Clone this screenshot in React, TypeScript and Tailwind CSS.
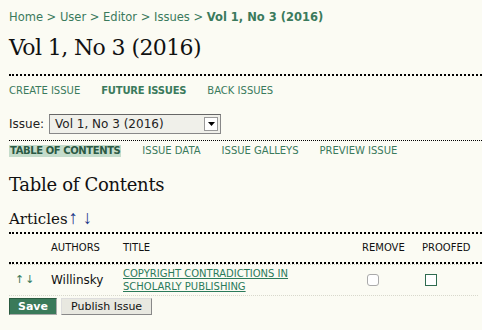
import React from "react";

const sans = "font-['DejaVu_Sans',Verdana,sans-serif]";
const serif = "font-['DejaVu_Serif',Georgia,serif]";

function Dotted({ light = false }: { light?: boolean }) {
  return (
    <div
      className={
        light
          ? "border-b border-dotted border-[#d8d8cc]"
          : "border-b-2 border-dotted border-black"
      }
    />
  );
}

export default function App() {
  return (
    <div className={`w-[482px] h-[330px] bg-[#fbfbf3] text-[#222] overflow-hidden pl-[9px] ${sans}`}>
      {/* breadcrumb */}
      <div className="pt-[9px] text-[11.5px] leading-[16px] text-[#3a7a5c] whitespace-nowrap">
        Home &gt; User &gt; Editor &gt; Issues &gt;{" "}
        <span className="font-bold">Vol 1, No 3 (2016)</span>
      </div>

      <h1 className={`${serif} text-[22px] leading-[30px] mt-[8px] tracking-[-0.6px] text-[#111]`}>
        Vol 1, No 3 (2016)
      </h1>

      <div className="mt-[11px]">
        <Dotted />
      </div>

      <div className="flex gap-[21px] text-[10px] leading-[14px] text-[#3a7a5c] mt-[8px]">
        <span>CREATE ISSUE</span>
        <span className="font-bold tracking-[-0.2px]">FUTURE ISSUES</span>
        <span>BACK ISSUES</span>
      </div>

      <div className="flex items-center mt-[16px] text-[12px] h-[20px]">
        <span className="mr-[5px]">Issue:</span>
        <div className="w-[172px] h-[20px] border border-[#888] border-t-[#666] bg-[#f0f0ea] flex items-center justify-between pl-[5px] pr-[2px]">
          <span>Vol 1, No 3 (2016)</span>
          <div className="w-[14px] h-[14px] bg-white border border-[#999] flex items-center justify-center">
            <svg width="7" height="4" viewBox="0 0 7 4"><path d="M0 0h7L3.5 4z" fill="#000" /></svg>
          </div>
        </div>
      </div>

      <div className="mt-[6px]">
        <div className="border-b border-dotted border-black" />
      </div>

      <div className="flex items-center text-[10px] leading-[12px] mt-[4px] text-[#3a7a5c]">
        <span className="bg-[#c5dccb] text-[#2c5a44] font-bold px-[1px] tracking-[-0.4px]">TABLE OF CONTENTS</span>
        <span className="ml-[21px]">ISSUE DATA</span>
        <span className="ml-[21px]">ISSUE GALLEYS</span>
        <span className="ml-[21px]">PREVIEW ISSUE</span>
      </div>

      <h2 className={`${serif} text-[18px] leading-[24px] mt-[16px] tracking-[-0.3px] text-[#111]`}>
        Table of Contents
      </h2>

      <h3 className={`${serif} text-[15px] leading-[22px] h-[22px] mt-[11px] text-[#111] flex items-baseline overflow-visible`}>
        Articles
        <span className="font-['Liberation_Serif',serif] text-[#1f3a8a] text-[19px] leading-[18px] ml-[1px]">↑ ↓</span>
      </h3>

      <div className="mt-[2px]">
        <Dotted />
      </div>

      <div className="grid grid-cols-[42px_72px_239px_60px_1fr] text-[10px] leading-[12px] h-[28px] items-center text-[#111]">
        <span />
        <span>AUTHORS</span>
        <span>TITLE</span>
        <span>REMOVE</span>
        <span>PROOFED</span>
      </div>

      <Dotted />
      <div className="pr-[9px]">
        <Dotted light />
      </div>

      <div className="grid grid-cols-[42px_72px_239px_60px_1fr] h-[30px] items-center">
        <span className="pl-[6px] text-[11px] text-[#3a7a5c] tracking-[1px]">↑↓</span>
        <span className="text-[12px] text-[#111]">Willinsky</span>
        <span className="text-[10px] leading-[13px] text-[#2a7a5a] underline">
          COPYRIGHT CONTRADICTIONS IN
          <br />
          SCHOLARLY PUBLISHING
        </span>
        <span className="pl-[5px]">
          <span className="block w-[12px] h-[12px] rounded-[3px] border border-[#aaa] bg-white" />
        </span>
        <span className="pl-[3px]">
          <span className="block w-[12px] h-[12px] border border-[#2f6b4f] bg-white" />
        </span>
      </div>

      <div className="pr-[4px]">
        <Dotted light />
      </div>

      <div className="flex gap-[4px] mt-[2px]">
        <button className="h-[17px] px-[8px] bg-[#3a7a5a] text-white text-[11px] font-bold border border-[#2a5a40] border-r-[#aaa] border-b-[#aaa]">
          Save
        </button>
        <button className="h-[17px] px-[9px] bg-[#e8e8e0] text-[#111] text-[11px] border border-[#ddd] border-r-[#888] border-b-[#888]">
          Publish Issue
        </button>
      </div>
    </div>
  );
}
